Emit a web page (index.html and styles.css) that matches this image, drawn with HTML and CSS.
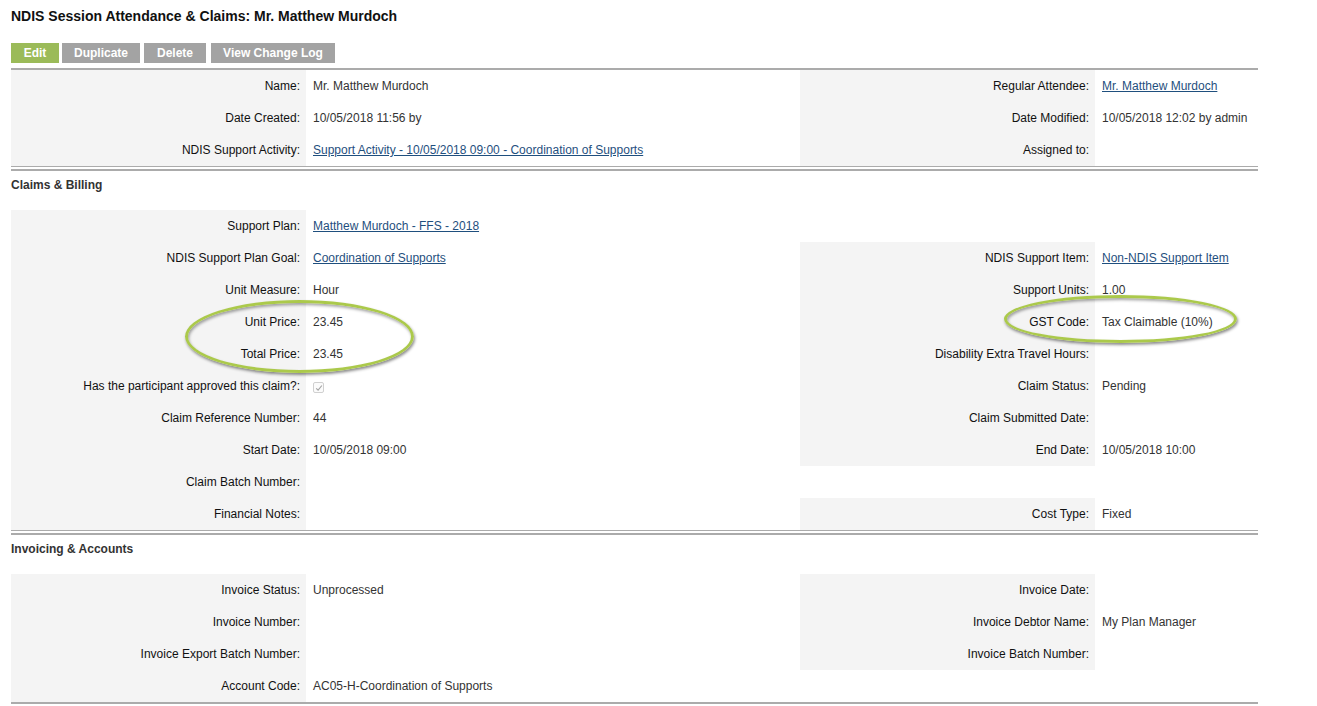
FILE: index.html
```html
<!DOCTYPE html>
<html lang="en">
<head>
    <meta charset="UTF-8">
    <title>NDIS Session Attendance &amp; Claims: Mr. Matthew Murdoch</title>
    <link rel="stylesheet" href="styles.css">
</head>
<body>
    <div class="page">
        <h1>NDIS Session Attendance &amp; Claims: Mr. Matthew Murdoch</h1>

        <!-- actions -->
        <div class="acoes">
            <a class="botao botao-edit" href="#">Edit</a>
            <a class="botao botao-dup" href="#">Duplicate</a>
            <a class="botao botao-del" href="#">Delete</a>
            <a class="botao botao-log" href="#">View Change Log</a>
        </div>

        <!-- header details -->
        <table class="detail first">
            <colgroup>
                <col class="c-lbl"><col class="c-val"><col class="c-lbl"><col class="c-val2">
            </colgroup>
            <tr>
                <th>Name:</th><td>Mr. Matthew Murdoch</td>
                <th>Regular Attendee:</th><td><a href="#">Mr. Matthew Murdoch</a></td>
            </tr>
            <tr>
                <th>Date Created:</th><td>10/05/2018 11:56 by</td>
                <th>Date Modified:</th><td>10/05/2018 12:02 by admin</td>
            </tr>
            <tr>
                <th>NDIS Support Activity:</th><td><a href="#">Support Activity - 10/05/2018 09:00 - Coordination of Supports</a></td>
                <th>Assigned to:</th><td></td>
            </tr>
        </table>

        <!-- Claims & Billing -->
        <h3 class="section">Claims &amp; Billing</h3>
        <table class="detail">
            <colgroup>
                <col class="c-lbl"><col class="c-val"><col class="c-lbl"><col class="c-val2">
            </colgroup>
            <tr>
                <th>Support Plan:</th><td><a href="#">Matthew Murdoch - FFS - 2018</a></td>
                <th class="vazio"></th><td></td>
            </tr>
            <tr>
                <th>NDIS Support Plan Goal:</th><td><a href="#">Coordination of Supports</a></td>
                <th>NDIS Support Item:</th><td><a href="#">Non-NDIS Support Item</a></td>
            </tr>
            <tr>
                <th>Unit Measure:</th><td>Hour</td>
                <th>Support Units:</th><td>1.00</td>
            </tr>
            <tr>
                <th>Unit Price:</th><td>23.45</td>
                <th>GST Code:</th><td>Tax Claimable (10%)</td>
            </tr>
            <tr>
                <th>Total Price:</th><td>23.45</td>
                <th>Disability Extra Travel Hours:</th><td></td>
            </tr>
            <tr>
                <th>Has the participant approved this claim?:</th>
                <td><span class="check"><svg width="8" height="8" viewBox="0 0 8 8"><path d="M1.2 4.3 L3.1 6.2 L6.9 1.5" fill="none" stroke="#a3a3a3" stroke-width="1.1"/></svg></span></td>
                <th>Claim Status:</th><td>Pending</td>
            </tr>
            <tr>
                <th>Claim Reference Number:</th><td>44</td>
                <th>Claim Submitted Date:</th><td></td>
            </tr>
            <tr>
                <th>Start Date:</th><td>10/05/2018 09:00</td>
                <th>End Date:</th><td>10/05/2018 10:00</td>
            </tr>
            <tr>
                <th>Claim Batch Number:</th><td></td>
                <th class="vazio"></th><td></td>
            </tr>
            <tr>
                <th>Financial Notes:</th><td></td>
                <th>Cost Type:</th><td>Fixed</td>
            </tr>
        </table>

        <!-- Invoicing & Accounts -->
        <h3 class="section">Invoicing &amp; Accounts</h3>
        <table class="detail last">
            <colgroup>
                <col class="c-lbl"><col class="c-val"><col class="c-lbl"><col class="c-val2">
            </colgroup>
            <tr>
                <th>Invoice Status:</th><td>Unprocessed</td>
                <th>Invoice Date:</th><td></td>
            </tr>
            <tr>
                <th>Invoice Number:</th><td></td>
                <th>Invoice Debtor Name:</th><td>My Plan Manager</td>
            </tr>
            <tr>
                <th>Invoice Export Batch Number:</th><td></td>
                <th>Invoice Batch Number:</th><td></td>
            </tr>
            <tr>
                <th>Account Code:</th><td>AC05-H-Coordination of Supports</td>
                <th class="vazio"></th><td></td>
            </tr>
        </table>

        <!-- highlight rings drawn over the screenshot -->
        <div class="anel anel-preco"></div>
        <div class="anel anel-gst"></div>
    </div>
</body>
</html>
```

FILE: styles.css
```css
* {
    margin: 0;
    padding: 0;
    box-sizing: border-box;
}

body {
    font-family: 'Liberation Sans', Arial, sans-serif;
    font-size: 12px;
    color: #333;
    background: #fff;
}

.page {
    position: relative;
    width: 1258px;
    padding-left: 11px;
}

h1 {
    font-size: 14px;
    line-height: 16px;
    font-weight: bold;
    color: #111;
    padding-top: 8px;
    margin-bottom: 19px;
}

.acoes {
    display: flex;
    margin-bottom: 5px;
}

.botao {
    display: block;
    height: 20px;
    line-height: 20px;
    text-align: center;
    background-color: #a3a3a3;
    color: #fff;
    font-weight: bold;
    font-size: 12px;
    text-decoration: none;
}

.botao-edit {
    width: 48px;
    background-color: #9bbb59;
}

.botao-dup {
    width: 78px;
    margin-left: 3px;
}

.botao-del {
    width: 62px;
    margin-left: 4px;
}

.botao-log {
    width: 124px;
    margin-left: 5px;
}

.detail {
    width: 1247px;
    table-layout: fixed;
    border-collapse: separate;
    border-spacing: 0;
    border-bottom: 1px solid #ababab;
}

.detail.first {
    border-top: 2px solid #ababab;
}

.detail.last {
    border-bottom-width: 2px;
}

.c-lbl {
    width: 295px;
}

.c-val {
    width: 494px;
}

.c-val2 {
    width: 163px;
}

.detail tr {
    height: 32px;
}

.detail th {
    background-color: #f4f4f4;
    color: #111;
    font-weight: normal;
    text-align: right;
    padding: 0 6px 0 0;
    line-height: 14px;
    vertical-align: middle;
    white-space: nowrap;
}

.detail th.vazio {
    background-color: transparent;
}

.detail td {
    padding: 0 0 0 7px;
    line-height: 14px;
    vertical-align: middle;
    white-space: nowrap;
}

.detail a {
    color: #1f4f7e;
    text-decoration: underline;
}

.section {
    margin-top: 2px;
    border-top: 2px solid #ababab;
    font-size: 12px;
    line-height: 16px;
    font-weight: bold;
    color: #333;
    padding: 6px 0 17px;
}

.check {
    display: inline-flex;
    align-items: center;
    justify-content: center;
    width: 11px;
    height: 11px;
    margin-top: 2px;
    border: 1px solid #d0d0d0;
    border-radius: 2px;
    background: #fbfbfb;
    vertical-align: middle;
}

.anel {
    position: absolute;
    border: 3px solid #abc94b;
    border-radius: 50%;
    box-shadow: 1px 2px 3px rgba(0, 0, 0, 0.45), inset 1px 2px 3px rgba(0, 0, 0, 0.35);
}

.anel-preco {
    left: 185px;
    top: 300px;
    width: 229px;
    height: 73px;
}

.anel-gst {
    left: 1004px;
    top: 295px;
    width: 233px;
    height: 48px;
}
```
